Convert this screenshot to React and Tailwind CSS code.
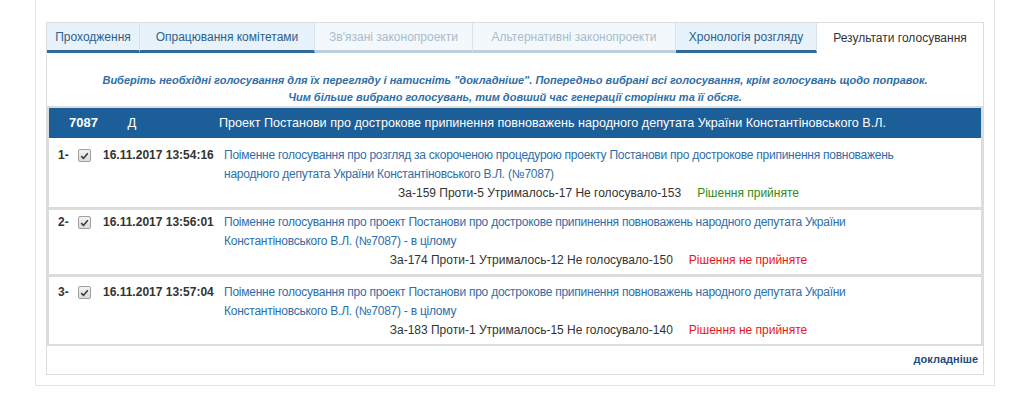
import React from 'react';

const tabs = [
  { label: 'Проходження', w: 'w-[93px]', kind: 'normal' },
  { label: 'Опрацювання комітетами', w: 'w-[175px]', kind: 'normal' },
  { label: 'Зв\'язані законопроекти', w: 'w-[158px]', kind: 'disabled' },
  { label: 'Альтернативні законопроекти', w: 'w-[203px]', kind: 'disabled' },
  { label: 'Хронологія розгляду', w: 'w-[141px]', kind: 'normal' },
  { label: 'Результати голосування', w: 'w-[166px]', kind: 'active' },
];

const votes = [
  {
    n: '1-',
    date: '16.11.2017 13:54:16',
    text: 'Поіменне голосування про розгляд за скороченою процедурою проекту Постанови про дострокове припинення повноважень народного депутата України Константіновського В.Л. (№7087)',
    stats: 'За-159 Проти-5 Утрималось-17 Не голосувало-153',
    result: 'Рішення прийняте',
    ok: true,
    pt: 'pt-[8px]',
  },
  {
    n: '2-',
    date: '16.11.2017 13:56:01',
    text: 'Поіменне голосування про проект Постанови про дострокове припинення повноважень народного депутата України Константіновського В.Л. (№7087) - в цілому',
    stats: 'За-174 Проти-1 Утрималось-12 Не голосувало-150',
    result: 'Рішення не прийняте',
    ok: false,
    pt: 'pt-[3px]',
  },
  {
    n: '3-',
    date: '16.11.2017 13:57:04',
    text: 'Поіменне голосування про проект Постанови про дострокове припинення повноважень народного депутата України Константіновського В.Л. (№7087) - в цілому',
    stats: 'За-183 Проти-1 Утрималось-15 Не голосувало-140',
    result: 'Рішення не прийняте',
    ok: false,
    pt: 'pt-[6px]',
  },
];

const Tab = ({ tab }) => {
  if (tab.kind === 'active') {
    return (
      <div className={`${tab.w} h-[30px] flex items-center justify-center bg-white text-[#333333]`}>
        {tab.label}
      </div>
    );
  }
  const disabled = tab.kind === 'disabled';
  return (
    <div
      className={`${tab.w} h-[30px] flex items-center justify-center border-r border-[#d8e2ea] border-b-[3px] ${
        disabled
          ? 'bg-[#f3f8fc] text-[#a9bccb] border-b-[#b9d0e2]'
          : 'bg-[#e8f2fa] text-[#2b5f8e] border-b-[#2f6b9a]'
      }`}
    >
      {tab.label}
    </div>
  );
};

const Checkbox = () => (
  <span className="inline-flex w-[13px] h-[13px] items-center justify-center rounded-[2px] border border-[#a0a0a0] bg-gradient-to-b from-[#f2f2f2] to-[#dcdcdc]">
    <svg width="9" height="8" viewBox="0 0 9 8">
      <path d="M1.2 4.2 L3.5 6.4 L7.8 1.2" fill="none" stroke="#3a3a3a" strokeWidth="1.6" />
    </svg>
  </span>
);

export default function App() {
  return (
    <div className="bg-white min-h-[406px]" style={{ fontFamily: '"Liberation Sans", Arial, sans-serif' }}>
      <div className="ml-[35px] w-[960px] border-x border-b border-[#e2e2e2] px-[10px] pt-[22px] pb-[10px]">
        <div className="border border-[#dddddd]">
          <div className="flex text-[12px]">
            {tabs.map((t, i) => (
              <Tab key={i} tab={t} />
            ))}
          </div>

          <div className="pt-[19px] text-center text-[11px] leading-[17px] font-bold italic text-[#2f6fa6]">
            <p>Виберіть необхідні голосування для їх перегляду і натисніть "докладніше". Попередньо вибрані всі голосування, крім голосувань щодо поправок.</p>
            <p>Чим більше вибрано голосувань, тим довший час генерації сторінки та її обсяг.</p>
          </div>

          <div className="border-2 border-[#dcdcdc]">
            <div className="h-[30px] flex items-center bg-[#1c5e98] text-white">
              <div className="w-[69px] text-center font-bold text-[13px]">7087</div>
              <div className="w-[28px] text-center text-[13px]">Д</div>
              <div className="pl-[73px] text-[12.6px]">Проект Постанови про дострокове припинення повноважень народного депутата України Константіновського В.Л.</div>
            </div>

            {votes.map((v, i) => (
              <div
                key={i}
                className={`flex text-[12px] ${v.pt} pb-[5px] ${i > 0 ? 'border-t-[3px] border-[#dcdcdc]' : ''}`}
              >
                <div className="w-[29px] pl-[9px] leading-[19px] font-bold text-[#333333]">{v.n}</div>
                <div className="w-[25px] h-[19px] flex items-center">
                  <Checkbox />
                </div>
                <div className="w-[121px] leading-[19px] font-bold text-[#333333]">{v.date}</div>
                <div className="flex-1 pr-[8px]">
                  <p className="pr-[40px] leading-[19px] tracking-[-0.25px] text-[#2f6ea8]">{v.text}</p>
                  <p className="text-center leading-[18px] text-[#333333]">
                    {v.stats}
                    <span className={`ml-[16px] ${v.ok ? 'text-[#2f8a12]' : 'text-[#e8161c]'}`}>{v.result}</span>
                  </p>
                </div>
              </div>
            ))}
          </div>

          <div className="pt-[6px] pb-[8px] pr-[5px] text-right text-[11px] leading-[14px] font-bold text-[#1f4c7a]">
            докладніше
          </div>
        </div>
      </div>
    </div>
  );
}
